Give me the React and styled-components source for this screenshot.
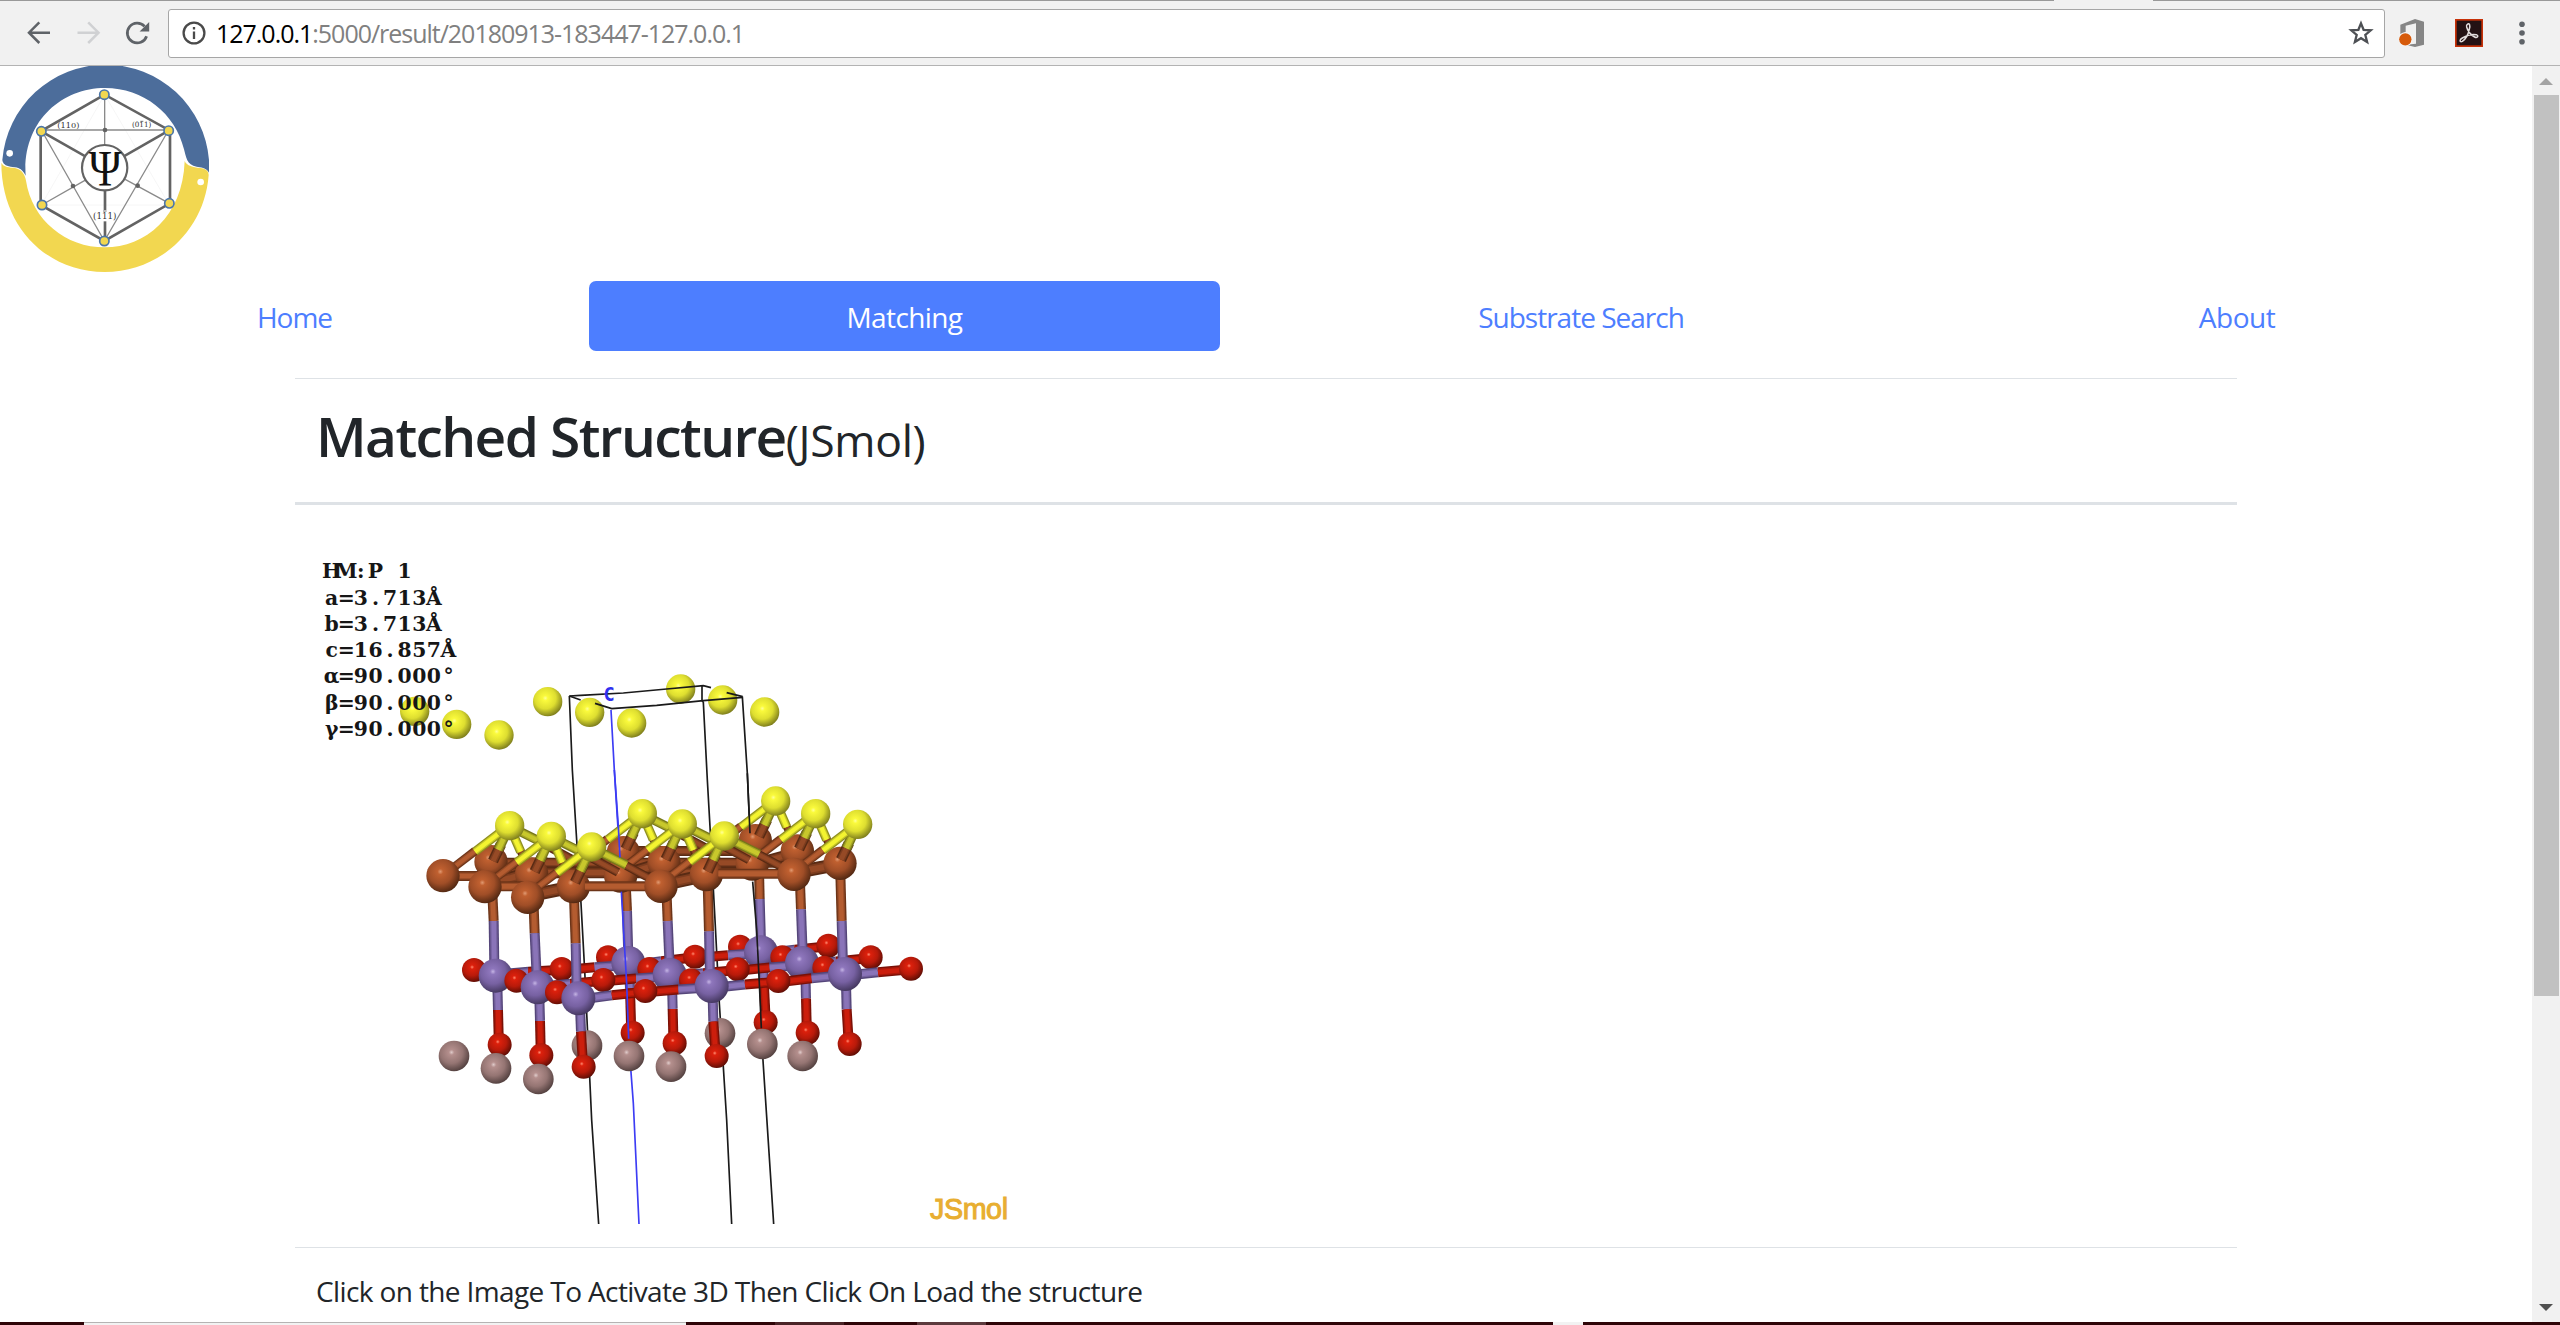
import React from 'react';
import styled, { createGlobalStyle } from 'styled-components';

const Global = createGlobalStyle`
  *, *::before, *::after { box-sizing: border-box; }
  html, body { margin: 0; padding: 0; overflow: hidden; background: #fff; }
  body { font-family: "Open Sans", "Noto Sans", sans-serif; color: #212529; }
  svg { display: block; flex: none; }
`;

const Window = styled.div`
  width: 2560px;
  height: 1325px;
  display: flex;
  flex-direction: column;
  overflow: hidden;
`;

/* ---------- browser chrome ---------- */

const TabEdge = styled.div`
  height: 1px;
  flex: none;
  display: flex;
  background: #999;
`;

const ActiveTab = styled.div`
  width: 99px;
  margin-left: 2054px;
  background: #f1f1f1;
`;

const Toolbar = styled.header`
  height: 65px;
  flex: none;
  display: flex;
  align-items: center;
  padding-left: 20px;
  background: #f1f1f1;
  border-bottom: 1px solid #b3b3b3;
`;

const NavButton = styled.button`
  width: 50px;
  height: 40px;
  padding: 0;
  border: 0;
  background: none;
  color: ${(p) => (p.$muted ? '#d0d1d3' : '#5f6368')};
`;

const AddressBar = styled.div`
  flex: 1;
  height: 49px;
  margin: 0 14px 0 -2px;
  padding: 0 10px 0 13px;
  display: flex;
  align-items: center;
  background: #fff;
  border: 1px solid #a6a6a6;
  border-radius: 3px;
`;

const Url = styled.div`
  flex: 1;
  margin-left: 10px;
  font-size: 25px;
  line-height: 46px;
  letter-spacing: -1.02px;
  color: #808080;
  white-space: nowrap;
`;

const UrlHost = styled.span`
  color: #000;
`;

const Extensions = styled.div`
  width: 161px;
  display: flex;
  align-items: center;
`;

const ExtensionSlot = styled.div`
  width: ${(p) => p.$w}px;
`;

/* ---------- page ---------- */

const Viewport = styled.div`
  flex: 1;
  min-height: 0;
  display: flex;
`;

const Page = styled.main`
  width: 2532px;
  flex: none;
  overflow: hidden;
  background: #fff;
`;

const Brand = styled.div`
  height: 215px;
`;

const Nav = styled.nav`
  height: 70px;
  display: grid;
  grid-template-columns: 589px 631px 722px 590px;
`;

const NavLink = styled.a`
  display: flex;
  align-items: center;
  justify-content: center;
  padding-top: 1px;
  border-radius: 7px;
  font-size: 28px;
  letter-spacing: ${(p) => p.$track}px;
  color: ${(p) => (p.$active ? '#fff' : '#4d7eff')};
  background: ${(p) => (p.$active ? '#4d7eff' : 'transparent')};
`;

const Table = styled.section`
  width: 1942px;
  margin: 27px 0 0 295px;
`;

const HeadRow = styled.div`
  height: 127px;
  padding: 19px 21px 0;
  border-top: 1px solid #dee2e6;
  border-bottom: 3px solid #dee2e6;
`;

const Title = styled.h1`
  margin: 0;
  font-size: 55px;
  line-height: 76px;
  font-weight: 600;
  letter-spacing: -1.6px;
  white-space: nowrap;
`;

const TitleNote = styled.small`
  font-size: 44.5px;
  font-weight: 400;
  letter-spacing: -0.3px;
`;

const StructureRow = styled.div`
  height: 742px;
  padding: 20px 21px 0;
`;

const CaptionRow = styled.div`
  padding: 22px 21px;
  border-top: 1px solid #dee2e6;
  font-size: 28px;
  line-height: 42px;
  letter-spacing: -0.62px;
  white-space: nowrap;
`;

const ScrollTrack = styled.aside`
  width: 28px;
  display: flex;
  flex-direction: column;
  align-items: center;
  background: #f1f1f1;
`;

const ScrollButton = styled.div`
  width: 28px;
  height: 29px;
  padding-top: ${(p) => p.$drop || 0}px;
  flex: none;
  display: flex;
  align-items: center;
  justify-content: center;
`;

const Thumb = styled.div`
  width: 25px;
  height: 901px;
  margin: 0 1px 0 2px;
  background: #c1c1c1;
`;

const Spacer = styled.div`
  flex: 1;
`;

const Taskbar = styled.footer`
  height: 3px;
  flex: none;
  display: flex;
  background: #2f0508;
`;

const TaskSlot = styled.div`
  width: ${(p) => p.$w}px;
  background: ${(p) => p.$c};
  border-top: ${(p) => (p.$line ? '1px solid #b5b3b3' : '0')};
`;

/* ---------- logo ---------- */

const Logo = () => (
  <svg width="220" height="214" viewBox="0 18 660 642">
    <path
      d="M4 308C10 322 30 322 45 324C66 328 75 345 78 362C96 480 198 562 314 562C436 562 548 470 554 303C560 318 580 322 600 324C618 326 626 334 626 345C614 510 480 636 314 636C140 636 4 500 4 308Z"
      fill="#f2d750"
    />
    <path
      d="M7 300A311 311 0 0 1 627 300L627 338C620 322 600 322 590 320C560 316 558 290 552 268C526 160 430 84 315 84C180 84 66 190 77 347C66 322 48 321 32 320C16 318 8 310 7 300Z"
      fill="#4c6d9b"
    />
    <circle cx="29" cy="280" r="10" fill="#fff" />
    <circle cx="602" cy="366" r="10" fill="#fff" />
    <g stroke="#f1f1f1" strokeWidth="2" fill="none">
      <path d="M314 104L124 435H508Z" />
    </g>
    <g stroke="#8a8a8a" strokeWidth="4" fill="none">
      <path d="M124 210H506L313 543Z M314 104V260 M125 435L260 358 M508 430L370 355" />
    </g>
    <g stroke="#636363" strokeWidth="8" fill="none">
      <path d="M314 104L122 214V435L313 543L510 430V212Z" />
      <path d="M124 214L314 322L506 212 M315 322V543" />
    </g>
    <g fill="#636363">
      <circle cx="315" cy="210" r="7" />
      <circle cx="219" cy="378" r="7" />
      <circle cx="413" cy="377" r="7" />
    </g>
    <circle cx="314" cy="323" r="68" fill="#fff" stroke="#636363" strokeWidth="6.5" />
    <rect x="290" y="450" width="50" height="34" fill="#fff" />
    {[[313, 104], [124, 214], [506, 212], [126, 435], [508, 430], [313, 543]].map(([x, y]) => (
      <circle key={`${x}-${y}`} cx={x} cy={y} r="14" fill="#f2d750" stroke="#4c76a8" strokeWidth="5" />
    ))}
    <g fill="#111" fontFamily="'Liberation Serif', serif" textAnchor="middle">
      <text x="315" y="376" fontSize="153" textLength="98" lengthAdjust="spacingAndGlyphs">Ψ</text>
      <g fill="#333" fontFamily="'DejaVu Serif', serif">
        <text x="205" y="203" fontSize="24" textLength="66" lengthAdjust="spacingAndGlyphs">(110)</text>
        <text x="425" y="202" fontSize="22" textLength="58" lengthAdjust="spacingAndGlyphs">(011)</text>
        <text x="314" y="477" fontSize="28" textLength="70" lengthAdjust="spacingAndGlyphs">(111)</text>
      </g>
    </g>
    <path d="M421 184H430M309 453H320" stroke="#333" strokeWidth="2" />
  </svg>
);

/* ---------- molecule ---------- */

const PALETTE = {
  S: ['#ffff9a', '#fafa3c', '#dede30', '#74741a'],
  B: ['#e09a72', '#c06030', '#a04e27', '#4a2410'],
  P: ['#c4b4e4', '#8e76bc', '#7761a2', '#3f3358'],
  R: ['#ff8a70', '#dc200c', '#b81a0a', '#560c04'],
  K: ['#e0cccb', '#b48f8d', '#957573', '#4c3b3a'],
};
const BOND = {
  S: ['#8f8f1e', '#f4f430'],
  D: ['#77771a', '#c8c82c'],
  B: ['#6c3418', '#b45c30'],
  E: ['#592b14', '#964a26'],
  P: ['#55467a', '#8a74b8'],
  R: ['#7a1006', '#cc1e0c'],
};
const RADIUS = { S: 44, B: 50, P: 51, R: 36, K: 46 };

const Atom = ({ k, x, y }) => <circle cx={x} cy={y} r={RADIUS[k]} fill={`url(#atom-${k})`} />;

const Bond = ({ k, p, w = 30 }) => {
  const [x1, y1, x2, y2] = p;
  return (
    <g fill="none">
      <path d={`M${x1} ${y1}L${x2} ${y2}`} stroke={BOND[k][0]} strokeWidth={w} />
      <path d={`M${x1} ${y1}L${x2} ${y2}`} stroke={BOND[k][1]} strokeWidth={w * 0.72} strokeOpacity="0.6" />
      <path d={`M${x1} ${y1}L${x2} ${y2}`} stroke={BOND[k][1]} strokeWidth={w * 0.46} />
    </g>
  );
};

const Pillar = ({ p }) => {
  const [x1, y1, x2, y2, x3, y3] = p;
  return (
    <>
      <Bond k="B" p={[x1, y1, x2, y2]} />
      <Bond k="P" p={[x2, y2, x3, y3]} />
    </>
  );
};

const Stem = ({ p }) => {
  const [x1, y1, x2, y2, x3, y3, bx, by] = p;
  return (
    <>
      <Bond k="P" p={[x1, y1, x2, y2]} />
      <Bond k="R" p={[x2, y2, x3, y3]} />
      <Atom k="R" x={bx} y={by} />
    </>
  );
};

const OxideRow = ({ pts }) => {
  const out = [];
  pts.forEach(([k, x, y], i) => {
    if (i === pts.length - 1) return;
    const [k2, nx, ny] = pts[i + 1];
    const mx = (x + nx) / 2;
    const my = (y + ny) / 2 + 2;
    out.push(<Bond key={`a${i}`} k={k} p={[x, y + 4, mx, my]} />);
    out.push(<Bond key={`b${i}`} k={k2} p={[mx, my, nx, ny + 2]} />);
  });
  pts.forEach(([k, x, y], i) => {
    if (k === 'R') out.push(<Atom key={`r${i}`} k="R" x={x} y={y} />);
  });
  return <>{out}</>;
};

const Pyramid = ({ x, y, right = true, mid = true }) => (
  <>
    {right && (
      <>
        <Bond k="E" p={[x + 104, y + 56, x + 200, y + 108]} w={26} />
        <Bond k="D" p={[x + 20, y + 12, x + 104, y + 54]} w={28} />
      </>
    )}
    {mid && (
      <>
        <Bond k="E" p={[x + 30, y + 70, x + 44, y + 100]} w={24} />
        <Bond k="S" p={[x + 6, y + 16, x + 33, y + 78]} w={28} />
      </>
    )}
    <Bond k="E" p={[x - 26, y + 56, x - 50, y + 106]} w={32} />
    <Bond k="D" p={[x - 8, y + 16, x - 34, y + 72]} w={30} />
    <Bond k="B" p={[x - 104, y + 76, x - 164, y + 122]} w={26} />
    <Bond k="S" p={[x - 18, y + 12, x - 104, y + 78]} w={27} />
    <Atom k="S" x={x} y={y} />
  </>
);

const CELL_TEXT = ['HM:P 1', 'a=3.713Å', 'b=3.713Å', 'c=16.857Å', 'α=90.000°', 'β=90.000°', 'γ=90.000°'];

const Molecule = () => (
  <svg width="700" height="700" viewBox="-282 -735 2100 2100">
    <defs>
      {Object.entries(PALETTE).map(([k, c]) => (
        <radialGradient key={k} id={`atom-${k}`} cx="0.42" cy="0.38" r="0.66">
          <stop offset="0" stopColor={c[0]} />
          <stop offset="0.13" stopColor={c[1]} />
          <stop offset="0.55" stopColor={c[2]} />
          <stop offset="1" stopColor={c[3]} />
        </radialGradient>
      ))}
    </defs>

    {[[14, -176], [140, -137], [267, -105], [413, -205], [539, -173], [665, -141], [812, -243], [938, -210], [1064, -174]].map(([x, y]) => (
      <Atom key={x} k="S" x={x} y={y} />
    ))}

    <g stroke="#1a1a1a" strokeWidth="5" fill="none">
      <path d="M478 -222L512 -224L640 -231L770 -243L880 -253L903 -247" />
      <path d="M478 -222L512 -210 M555 -200L605 -184L740 -194L880 -208L998 -218" />
      <path d="M950 -232L998 -220" />
      <path d="M478 -222L487 0L500 210L513 400L524 600L532 770L545 1050L566 1362" />
      <path d="M876 -253V-208L880 -203L892 30L900 170L915 450L928 700L950 1050L965 1362" />
      <path d="M997 -220L1012 10L1020 190 M1053 780L1070 1040L1091 1362" />
    </g>
    <path d="M603 -180L613 0L628 240 M661 880L670 1000L687 1362" stroke="#3c3cf4" strokeWidth="5" fill="none" />

    {/* lower layer, rear */}
    <Atom k="K" x={531} y={827} />
    <Atom k="K" x={930} y={790} />

    {/* stems below the oxide sheet */}
    <Stem p={[1060, 600, 1062, 650, 1066, 730, 1067, 757]} />
    <Stem p={[658, 620, 660, 655, 663, 760, 668, 788]} />
    <Stem p={[1186, 600, 1188, 686, 1190, 765, 1193, 788]} />
    <Stem p={[786, 640, 788, 717, 790, 800, 794, 820]} />
    <Stem p={[1308, 640, 1310, 718, 1315, 800, 1319, 822]} />
    <Stem p={[262, 640, 264, 720, 266, 800, 269, 824]} />
    <Stem p={[388, 680, 390, 753, 392, 835, 394, 856]} />
    <Stem p={[908, 680, 910, 755, 916, 840, 920, 858]} />
    <Stem p={[510, 710, 513, 785, 518, 870, 521, 890]} />
    {[[1057, 822], [1178, 858], [657, 858], [783, 890], [132, 858], [258, 895], [385, 927]].map(([x, y]) => (
      <Atom key={x} k="K" x={x} y={y} />
    ))}

    {/* oxide sheet, rear to front */}
    <Atom k="R" x={990} y={530} />
    <Atom k="R" x={594} y={562} />
    <OxideRow pts={[['P', 255, 610], ['R', 455, 597], ['P', 653, 583], ['R', 855, 560], ['P', 1053, 547], ['R', 1255, 527]]} />
    <Pillar p={[1047, 300, 1049, 387, 1053, 520]} />
    <Pillar p={[647, 340, 651, 423, 655, 560]} />
    <Atom k="P" x={1053} y={547} />
    <Atom k="P" x={655} y={579} />
    <Atom k="R" x={192} y={600} />
    <Pillar p={[247, 370, 251, 453, 253, 590]} />
    <Atom k="P" x={257} y={617} />
    <Atom k="R" x={1117} y={562} />
    <Atom k="R" x={718} y={597} />
    <Atom k="R" x={319} y={632} />
    <OxideRow pts={[['P', 382, 648], ['R', 580, 630], ['P', 777, 617], ['R', 983, 598], ['P', 1175, 583], ['R', 1382, 562]]} />
    <Pillar p={[1170, 340, 1173, 418, 1178, 550]} />
    <Pillar p={[770, 380, 773, 453, 779, 590]} />
    <Pillar p={[371, 410, 374, 490, 380, 620]} />
    <Atom k="P" x={1176} y={579} />
    <Atom k="P" x={779} y={614} />
    <Atom k="P" x={383} y={652} />
    <Atom k="R" x={1243} y={593} />
    <Atom k="R" x={843} y={631} />
    <Atom k="R" x={441} y={667} />
    <OxideRow pts={[['P', 505, 685], ['R', 706, 663], ['P', 905, 650], ['R', 1105, 633], ['P', 1305, 613], ['R', 1503, 596]]} />
    <Pillar p={[1291, 310, 1295, 453, 1299, 590]} />
    <Pillar p={[893, 340, 897, 484, 900, 620]} />
    <Pillar p={[492, 380, 497, 520, 500, 660]} />
    <Atom k="P" x={1305} y={612} />
    <Atom k="P" x={905} y={648} />
    <Atom k="P" x={505} y={685} />

    {/* metal sheet and sulphur pyramids, rear to front */}
    <Bond k="E" p={[620, 243, 1035, 243]} w={30} />
    <Bond k="E" p={[243, 278, 1165, 278]} w={30} />
    <Bond k="B" p={[99, 318, 243, 318]} />
    <Bond k="E" p={[243, 308, 1030, 308]} w={34} />
    <Bond k="E" p={[1025, 285, 1170, 245]} w={34} />
    <Atom k="B" x={1036} y={212} />
    <Atom k="B" x={640} y={248} />
    <Atom k="B" x={243} y={275} />
    <Pyramid x={1097} y={93} right={false} />
    <Pyramid x={697} y={131} />
    <Pyramid x={299} y={167} />
    <Bond k="E" p={[640, 315, 770, 275]} w={38} />
    <Bond k="E" p={[225, 345, 370, 305]} w={38} />
    <Atom k="B" x={1162} y={243} />
    <Atom k="B" x={762} y={278} />
    <Atom k="B" x={365} y={312} />
    <Atom k="B" x={1027} y={282} />
    <Atom k="B" x={632} y={318} />
    <Pyramid x={1217} y={131} right={false} />
    <Pyramid x={817} y={162} />
    <Pyramid x={424} y={199} />
    <Bond k="B" p={[225, 349, 353, 349]} />
    <Bond k="E" p={[1152, 308, 1290, 282]} w={40} />
    <Bond k="E" p={[753, 345, 887, 316]} w={40} />
    <Bond k="E" p={[353, 378, 490, 350]} w={40} />
    <Atom k="B" x={1290} y={280} />
    <Atom k="B" x={889} y={314} />
    <Atom k="B" x={490} y={350} />
    <Bond k="B" p={[525, 349, 753, 349]} />
    <Bond k="B" p={[925, 311, 1152, 311]} />
    <Pyramid x={1343} y={163} right={false} mid={false} />
    <Pyramid x={943} y={198} mid={false} />
    <Pyramid x={545} y={231} mid={false} />
    <Atom k="B" x={1152} y={313} />
    <Atom k="B" x={753} y={349} />
    <Atom k="B" x={99} y={317} />
    <Atom k="B" x={225} y={350} />
    <Atom k="B" x={353} y={382} />

    <path d="M613 0L625 170L630 262 M634 365L643 520L650 640L656 806" stroke="#3c3cf4" strokeWidth="5" fill="none" />
    <path d="M1012 10L1020 190 M1028 335L1040 480L1048 640L1054 775" stroke="#1a1a1a" strokeWidth="5" fill="none" />

    <g fontFamily="'DejaVu Serif', serif" fontWeight="700" fontSize="61" fill="#161616" textAnchor="middle">
      {CELL_TEXT.map((line, i) => (
        <text key={line} y={-575 + i * 78.7} x={line.split('').map((_, n) => -235 + n * 43.8).join(' ')}>{line}</text>
      ))}
    </g>
    <text x="597" y="-208" fontFamily="'DejaVu Sans Mono', monospace" fontWeight="700" fontSize="56" fill="#3030f0" textAnchor="middle">C</text>
    <text x="1560" y="1346" fontFamily="'Liberation Sans', sans-serif" fontSize="86" fill="#e8ae30" stroke="#e8ae30" strokeWidth="3" textLength="234">JSmol</text>
  </svg>
);

/* ---------- toolbar icons ---------- */

const Arrow = ({ flip }) => (
  <svg width="50" height="40" viewBox="20 13 50 40">
    <path
      d="M50 32.7H29.5M39.3 22.3L29 32.7L39.3 43"
      fill="none"
      stroke="currentColor"
      strokeWidth="2.5"
      transform={flip ? 'translate(77.5 0) scale(-1 1)' : undefined}
    />
  </svg>
);

const Reload = () => (
  <svg width="50" height="40" viewBox="120 13 50 40">
    <path d="M144.6 26.4A9.9 9.9 0 1 0 146.6 36.2" fill="none" stroke="currentColor" strokeWidth="2.7" />
    <path d="M149.2 22V31.6H139.6Z" fill="currentColor" />
  </svg>
);

const Info = () => (
  <svg width="24" height="24" viewBox="0 0 24 24">
    <circle cx="12" cy="12" r="10.4" fill="none" stroke="#4a4a4a" strokeWidth="2.3" />
    <path d="M12 10.5V18M12 6V8.5" stroke="#4a4a4a" strokeWidth="2.3" />
  </svg>
);

const Star = () => (
  <svg width="27" height="26" viewBox="0 0 27 26">
    <path
      d="M14 3.4L16.6 9.8L23.8 10.3L18.3 14.9L20.1 22L14 18.2L7.9 22L9.7 14.9L4.2 10.3L11.4 9.8Z"
      fill="none"
      stroke="#4d5054"
      strokeWidth="2.3"
    />
  </svg>
);

const Office = () => (
  <svg width="26" height="28" viewBox="1080 57 78 84">
    <path d="M1084 74L1128 57L1155 65V134L1128 141L1100 134L1131 131V70L1100 77V96L1084 102Z" fill="#868686" />
    <circle cx="1099" cy="118" r="21" fill="#f6f6f6" />
    <circle cx="1099" cy="118" r="18.5" fill="#d65a0a" />
  </svg>
);

const Acrobat = () => (
  <svg width="28" height="28" viewBox="0 0 84 84">
    <rect width="84" height="84" fill="#c73108" />
    <rect x="5" y="5" width="74" height="74" fill="#241214" />
    <path
      d="M37 16C44 10 46 20 43 30C40 46 32 60 22 67C13 71 13 62 22 57C34 50 52 45 64 47C73 51 66 58 59 54C48 48 38 36 35 24C34 19 35 17 37 16Z"
      fill="none"
      stroke="#e4dede"
      strokeWidth="4.5"
    />
  </svg>
);

const Dots = () => (
  <svg width="8" height="26" viewBox="0 0 8 26">
    <circle cx="4" cy="4.3" r="2.8" fill="#5f6368" />
    <circle cx="4" cy="13" r="2.8" fill="#5f6368" />
    <circle cx="4" cy="21.7" r="2.8" fill="#5f6368" />
  </svg>
);

export default function App() {
  return (
    <Window>
      <Global />
      <TabEdge><ActiveTab /></TabEdge>
      <Toolbar>
        <NavButton><Arrow /></NavButton>
        <NavButton $muted><Arrow flip /></NavButton>
        <NavButton><Reload /></NavButton>
        <AddressBar>
          <Info />
          <Url><UrlHost>127.0.0.1</UrlHost>:5000/result/20180913-183447-127.0.0.1</Url>
          <Star />
        </AddressBar>
        <Extensions>
          <ExtensionSlot $w={56}><Office /></ExtensionSlot>
          <ExtensionSlot $w={63}><Acrobat /></ExtensionSlot>
          <ExtensionSlot $w={42}><Dots /></ExtensionSlot>
        </Extensions>
      </Toolbar>
      <Viewport>
        <Page>
          <Brand><Logo /></Brand>
          <Nav>
            <NavLink $track={-1}>Home</NavLink>
            <NavLink $track={-0.6} $active>Matching</NavLink>
            <NavLink $track={-1}>Substrate Search</NavLink>
            <NavLink $track={-0.5}>About</NavLink>
          </Nav>
          <Table>
            <HeadRow>
              <Title>Matched Structure<TitleNote>(JSmol)</TitleNote></Title>
            </HeadRow>
            <StructureRow><Molecule /></StructureRow>
            <CaptionRow>Click on the Image To Activate 3D Then Click On Load the structure</CaptionRow>
          </Table>
        </Page>
        <ScrollTrack>
          <ScrollButton $drop={2}>
            <svg width="14" height="7" viewBox="0 0 14 7"><path d="M0 7L7 0L14 7Z" fill="#a3a3a3" /></svg>
          </ScrollButton>
          <Thumb />
          <Spacer />
          <ScrollButton>
            <svg width="14" height="7" viewBox="0 0 14 7"><path d="M0 0L7 7L14 0Z" fill="#505050" /></svg>
          </ScrollButton>
        </ScrollTrack>
      </Viewport>
      <Taskbar>
        <TaskSlot $w={84} $c="#2f0508" />
        <TaskSlot $w={602} $c="#f2f2f2" $line />
        <TaskSlot $w={89} $c="#2f0508" />
        <TaskSlot $w={69} $c="#4a2427" />
        <TaskSlot $w={73} $c="#2f0508" />
        <TaskSlot $w={69} $c="#5c3a3d" />
        <TaskSlot $w={567} $c="#2f0508" />
        <TaskSlot $w={30} $c="#f2f2f2" />
      </Taskbar>
    </Window>
  );
}
